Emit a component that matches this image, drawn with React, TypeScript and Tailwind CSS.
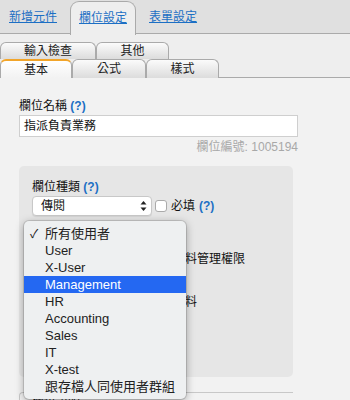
import React from "react";

const font = { fontFamily: "'Liberation Sans', 'Noto Sans CJK TC', sans-serif" };

function SubTab({ label, w, active }: { label: string; w: string; active?: boolean }) {
  return (
    <div
      className={
        "flex items-center justify-center rounded-t-[6px] border border-b-0 text-[12px] font-normal text-[#222] " +
        w +
        (active
          ? " border-[#aaa] border-t-2 border-t-[#f2a52a] bg-gradient-to-b from-[#ffffff] to-[#f2f2f2]"
          : " border-[#aaa] bg-gradient-to-b from-[#fbfbfb] to-[#dcdcdc]")
      }
    >
      {label}
    </div>
  );
}

function Help() {
  return <span className="font-bold text-[#1c6fc4]">(?)</span>;
}

const items = ["所有使用者", "User", "X-User", "Management", "HR", "Accounting", "Sales", "IT", "X-test", "跟存檔人同使用者群組"];

export default function App() {
  return (
    <div className="relative h-[400px] w-[350px] overflow-hidden bg-[#f2f2f2]" style={font}>
      {/* top bar */}
      <div className="flex h-[34px] items-stretch border-b border-[#aaa] bg-[#e0e0e0] pl-[9px]">
        <a className="flex items-center text-[12px] text-[#1c6fc4] underline">新增元件</a>
        <div className="relative z-10 ml-[13px] mt-[1px] flex h-[34px] w-[66px] items-center justify-center rounded-t-[9px] border border-b-0 border-[#aaa] bg-[#eeeeee] pb-[2px] text-[12px] text-[#1c6fc4] underline">
          欄位設定
        </div>
        <a className="ml-[13px] flex items-center text-[12px] text-[#1c6fc4] underline">表單設定</a>
      </div>

      {/* sub tabs */}
      <div className="bg-[#eeeeee] pt-[8px]">
        <div className="flex h-[17px]">
          <SubTab label="輸入檢查" w="w-[96px]" />
          <SubTab label="其他" w="w-[73px]" />
        </div>
        <div className="flex h-[19px]">
          <SubTab label="基本" w="w-[72px]" active />
          <div className="flex w-[74px] flex-col">
            <SubTab label="公式" w="w-[74px] flex-1" />
            <div className="h-px bg-[#aaa]" />
          </div>
          <div className="flex w-[73px] flex-col">
            <SubTab label="樣式" w="w-[73px] flex-1" />
            <div className="h-px bg-[#aaa]" />
          </div>
          <div className="flex-1 border-b border-[#aaa]" />
        </div>
      </div>

      {/* content */}
      <div className="px-[19px] pt-[20px]">
        <div className="text-[12px] leading-[16px] text-[#111]">
          欄位名稱 <Help />
        </div>
        <div className="mt-[1px] flex h-[22px] w-[279px] items-center border border-[#cfcfcf] bg-white pl-[4px] text-[12px] text-[#111]">
          指派負責業務
        </div>
        <div className="mt-[2px] w-[279px] text-right text-[12px] leading-[16px] text-[#a8a8a8]">欄位編號: 1005194</div>

        <div className="mt-[11px] h-[211px] w-[274px] rounded-[5px] bg-[#e6e6e6] pl-[13px] pt-[13px]">
          <div className="text-[12px] leading-[16px] text-[#111]">
            欄位種類 <Help />
          </div>
          <div className="mt-[1px] flex items-center">
            <div className="flex h-[20px] w-[120px] items-center justify-between rounded-[4px] border border-[#c8c8c8] bg-white pl-[8px] pr-[4px] text-[12px] text-[#111] shadow-[0_1px_1px_rgba(0,0,0,0.08)]">
              <span>傳閱</span>
              <svg width="7" height="12" viewBox="0 0 7 12">
                <path d="M0.5 4.5 L3.5 1 L6.5 4.5 Z" fill="#222" />
                <path d="M0.5 7.5 L3.5 11 L6.5 7.5 Z" fill="#222" />
              </svg>
            </div>
            <div className="ml-[3px] h-[12px] w-[12px] rounded-[3px] border border-[#aaa] bg-white" />
            <span className="ml-[4px] text-[12px] text-[#111]">必填</span>
            <span className="ml-[4px] text-[12px]">
              <Help />
            </span>
          </div>
          <div className="mt-[35px] pl-[141px] text-[12px] leading-[17px] text-[#111]">資料管理權限</div>
          <div className="mt-[26px] pl-[117px] text-[12px] leading-[17px] text-[#111]">顯示資料</div>
        </div>

        <div className="mt-[15px] h-[30px] w-[274px] rounded-tl-[4px] border-l border-t border-[#c8c8c8] pl-[12px] pt-[1px] text-[12px] leading-[14px] text-[#111]">
          欄位說明
        </div>
      </div>

      {/* dropdown menu */}
      <div className="absolute left-[24px] top-[221px] w-[162px] rounded-[5px] bg-[#eef0f1] py-[4px] shadow-[0_2px_8px_rgba(0,0,0,0.35)] ring-1 ring-[rgba(0,0,0,0.12)]">
        {items.map((it, i) => (
          <div
            key={it}
            className={
              "flex h-[17px] items-center text-[13px] " +
              (i === 3 ? "bg-[#2468f2] text-white" : "text-[#222]")
            }
          >
            <span className="w-[21px] pl-[6px] text-[12px]">{i === 0 ? "✓" : ""}</span>
            <span>{it}</span>
          </div>
        ))}
      </div>
    </div>
  );
}
